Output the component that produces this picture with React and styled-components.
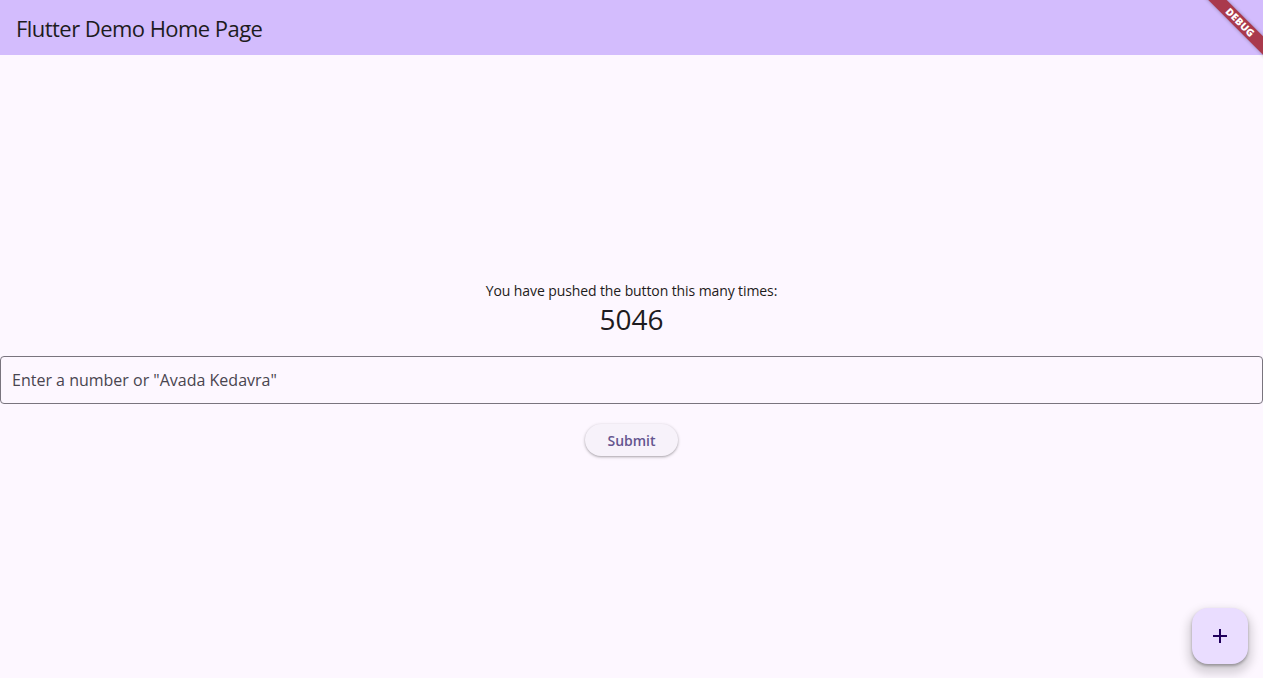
import React, { useState } from "react";
import styled, { createGlobalStyle } from "styled-components";

const GlobalStyle = createGlobalStyle`
  html, body { margin: 0; padding: 0; height: 100%; }
  body { background: #fdf7ff; font-family: "Open Sans", "Noto Sans", sans-serif; overflow: hidden; }
  #root { height: 100%; }
  * { box-sizing: border-box; }
`;

const Page = styled.div`
  position: relative;
  width: 100%;
  height: 678px;
  display: flex;
  flex-direction: column;
  background: #fdf7ff;
  overflow: hidden;
`;

const AppBar = styled.header`
  height: 55px;
  flex: none;
  background: #d3bcfd;
  display: flex;
  align-items: center;
  padding-left: 16px;
`;

const Title = styled.h1`
  margin: 0;
  font-size: 22px;
  font-weight: 400;
  color: #1d1b20;
  letter-spacing: -0.55px;
`;

const Body = styled.main`
  flex: 1;
  display: flex;
  flex-direction: column;
  align-items: center;
  justify-content: center;
  padding-top: 4px;
`;

const Label = styled.div`
  font-size: 14px;
  line-height: 20px;
  color: #1d1b20;
  letter-spacing: -0.1px;
`;

const Count = styled.div`
  font-size: 28px;
  line-height: 36px;
  color: #1d1b20;
`;

const Field = styled.input`
  margin-top: 19px;
  width: 100%;
  height: 48px;
  border: 1px solid #79747e;
  border-radius: 4px;
  background: transparent;
  padding: 0 11px;
  font-family: inherit;
  font-size: 16px;
  color: #1d1b20;
  outline: none;
  &::placeholder { color: #49454f; }
`;

const SubmitButton = styled.button`
  margin-top: 20px;
  height: 32px;
  padding: 0 22px;
  border: none;
  border-radius: 16px;
  background: #f7f2fa;
  color: #65558f;
  font-family: inherit;
  font-size: 14px;
  font-weight: 600;
  box-shadow: 0 1px 2px rgba(0,0,0,0.22), 0 1px 3px 1px rgba(0,0,0,0.1);
  cursor: pointer;
`;

const Fab = styled.button`
  position: absolute;
  right: 15px;
  bottom: 14px;
  width: 56px;
  height: 56px;
  border: none;
  border-radius: 16px;
  background: #eaddff;
  display: flex;
  align-items: center;
  justify-content: center;
  box-shadow: 0 2px 3px rgba(0,0,0,0.3), 0 6px 10px 4px rgba(0,0,0,0.15);
  cursor: pointer;
`;

const Banner = styled.div`
  position: absolute;
  left: 1190px;
  top: 16px;
  width: 100px;
  height: 13px;
  transform: rotate(45deg);
  background: rgba(160, 28, 36, 0.82);
  box-shadow: 0 0 4px rgba(0,0,0,0.3);
  color: #fff;
  font-family: "Open Sans", sans-serif;
  font-weight: 800;
  font-size: 10.2px;
  line-height: 13px;
  text-align: center;
  letter-spacing: 0.2px;
`;

export default function App() {
  const [count, setCount] = useState(5046);
  return (
    <>
      <GlobalStyle />
      <Page>
        <AppBar>
          <Title>Flutter Demo Home Page</Title>
        </AppBar>
        <Body>
          <Label>You have pushed the button this many times:</Label>
          <Count>{count}</Count>
          <Field placeholder={'Enter a number or "Avada Kedavra"'} />
          <SubmitButton>Submit</SubmitButton>
        </Body>
        <Fab onClick={() => setCount(count + 1)} aria-label="Increment">
          <svg width="24" height="24" viewBox="0 0 24 24">
            <path d="M19 13h-6v6h-2v-6H5v-2h6V5h2v6h6v2z" fill="#21005d" />
          </svg>
        </Fab>
        <Banner>DEBUG</Banner>
      </Page>
    </>
  );
}
